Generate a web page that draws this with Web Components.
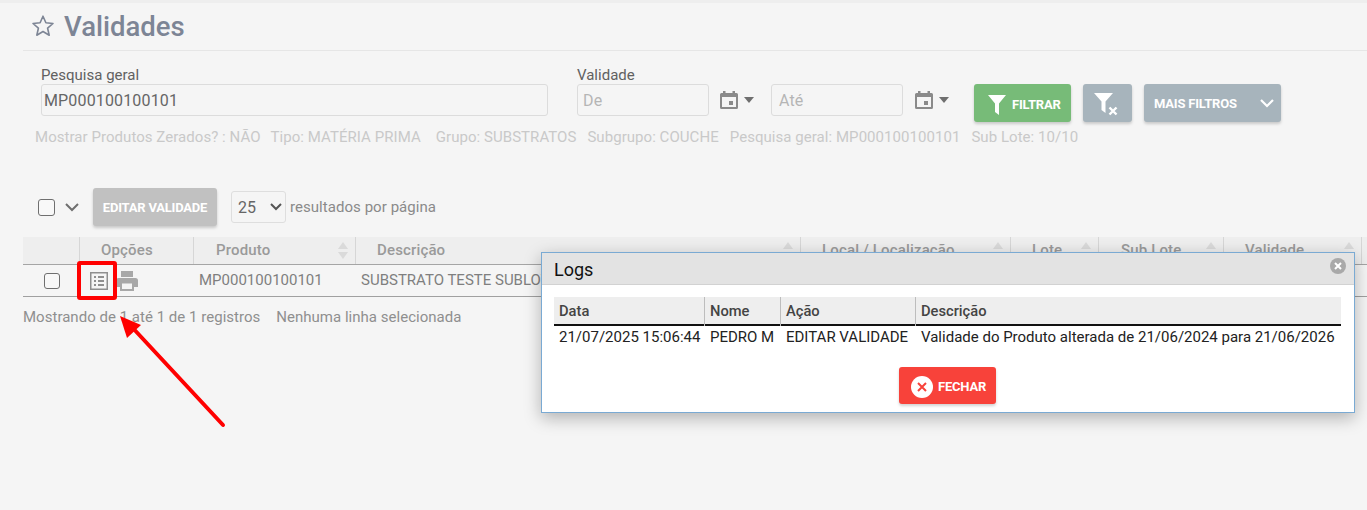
<!DOCTYPE html>
<html lang="pt"><head><meta charset="utf-8"><title>Validades</title>
<style>
html,body{margin:0;padding:0;background:#f5f5f5;font-family:Roboto,sans-serif}
body{width:1367px;height:510px;overflow:hidden;position:relative}
</style></head><body>
<validades-page></validades-page>
<template id="tpl-btn"><style>
:host{display:inline-flex;align-items:center;box-sizing:border-box;height:38px;border-radius:3px;background:var(--bg,#a7b4bc);color:#fff;font:700 13px Roboto,sans-serif;box-shadow:0 2px 3px rgba(0,0,0,.18);white-space:nowrap;letter-spacing:-.2px}
</style><slot></slot></template>
<template id="tpl-field"><style>
:host{display:block;box-sizing:border-box;height:32px;border:1px solid #dcdcdc;border-radius:3px;font:16px Roboto,sans-serif;line-height:31px;padding-left:var(--pl,2px);color:var(--c,#6e6e6e);width:var(--w,100px);letter-spacing:.15px}
</style><slot></slot></template>
<template id="tpl-check"><style>
:host{display:block;box-sizing:border-box;width:var(--s,16px);height:var(--s,16px);border:1px solid #6f6f6f;border-radius:3px;background:#f8f8f8}
</style></template>
<template id="tpl-page"><style>
:host{display:block;color:#777}
svg{display:block}
.top{height:3px;background:#eee}
.main{padding-left:23px}
.title{display:flex;align-items:center;gap:9px;padding-left:8px;border-bottom:1px solid #e6e6e6;box-sizing:border-box;height:48px}
.title svg{margin-top:-2px}
h1{margin:1px 0 0;font:500 27.5px/1 Roboto,sans-serif;color:#7d8595}
.filters{display:flex;padding:16px 0 0 18px;height:50px;position:relative}
.lab{font:15px/16px Roboto,sans-serif;color:#616161;height:17px}
.g1{width:536px}
.g2{width:397px}
.dates{display:flex;align-items:center}
.caret{width:0;height:0;border:5px solid transparent;border-top:6px solid #6f6f6f;border-bottom:0;margin-left:5px}
.btns{display:flex;gap:12px;align-self:flex-start;margin-top:17px}
.sum{padding:11px 0 0 12px;font:15px/18px Roboto,sans-serif;letter-spacing:.05px;color:#c9c9c9;height:19px;white-space:nowrap;display:flex}
.act{display:flex;align-items:center;margin-top:41px;height:38px;padding-left:15px}
.sel{box-sizing:border-box;width:55px;height:32px;border:1px solid #dedede;border-radius:3px;display:flex;align-items:center;justify-content:space-between;padding:0 3px 0 6px;font:16px Roboto,sans-serif;color:#666;margin-left:14px}
.res{font:15px Roboto,sans-serif;color:#8a8a8a;margin-left:4px;letter-spacing:.05px}
.tbl{margin-top:11px;width:1344px;font:15px Roboto,sans-serif}
.hd,.rw{display:grid;grid-template-columns:56px 114px 162px 445px 210px 88px 125px 138px 6px}
.hd{height:28px;background:#eee;border-bottom:1px solid #a5a5a5;box-sizing:border-box}
.hd>div{border-left:1px solid #d6d6d6;position:relative;color:#9a9a9a;font-weight:500;line-height:27px;padding-left:21px;white-space:nowrap;box-sizing:border-box;letter-spacing:.15px}
.hd>div:first-child{border-left:0}
.up,.dn{position:absolute;right:7px;width:0;height:0;border:5px solid transparent;border-bottom:0;border-top:0}
.up{top:5px;border-bottom:7px solid #dadada}
.dn{top:15px;border-top:7px solid #dadada}
.rw{height:32px;border-bottom:1px solid #a0a0a0;box-sizing:border-box;color:#7f7f7f;white-space:nowrap;align-items:center}
.rw>.c{padding-left:6px;margin-top:-2px}
.opts{display:flex;align-items:center;gap:7px;padding-left:11px}
.foot{margin-top:11px;font:15px/18px Roboto,sans-serif;color:#8f8f8f;display:flex;gap:16px;letter-spacing:.02px}
.modal{position:absolute;left:541px;top:252px;width:814px;height:161px;box-sizing:border-box;background:#fff;border:1px solid #7aaad3;box-shadow:0 5px 16px rgba(0,0,0,.28);color:#333}
.mh{height:32px;background:#e3e3e3;border-bottom:1px solid #d2d2d2;box-sizing:border-box;font:400 18px/33px Roboto,sans-serif;color:#111;padding-left:12px;position:relative}
.x{position:absolute;right:8px;top:5px}
.mb{padding:12px 13px 0 12px}
.mhd,.mrw{display:grid;grid-template-columns:150px 76px 135px 1fr;white-space:nowrap}
.mhd{height:29px;background:#eee;border-bottom:2px solid #111;box-sizing:border-box;color:#444;font:500 14.7px/29px Roboto,sans-serif}
.mhd>div{padding-left:5px;border-left:1px solid #bdbdbd}
.mhd>div:first-child{border-left:0}
.mrw{color:#222;height:24px;font:15px/22px Roboto,sans-serif}
.mrw>div{padding-left:6px}
.mrw>div:first-child{padding-left:5px}
.mf{display:flex;justify-content:center;margin-top:17px}
.redbox{position:absolute;left:77px;top:261px;width:40px;height:39px;box-sizing:border-box;border:4px solid #f00;border-radius:3px}
.arrow{position:absolute;left:110px;top:305px}
</style>
<div class="top"></div>
<div class="main">
  <div class="title">
    <svg width="24" height="24" viewBox="0 0 24 24" fill="none" stroke="#7d8595" stroke-width="1.6" stroke-linejoin="round"><path d="M12 2.200l2.900 6.600 7.100.7-5.400 4.700 1.600 7-6.200-3.700-6.200 3.700 1.600-7L2 9.500l7.100-.7z"/></svg>
    <h1>Validades</h1>
  </div>
  <div class="filters">
    <div class="g1"><div class="lab">Pesquisa geral</div><ui-field style="--w:507px;--c:#666">MP000100100101</ui-field></div>
    <div class="g2"><div class="lab">Validade</div>
      <div class="dates">
        <ui-field style="--w:132px;--c:#b5b5b5;--pl:5px">De</ui-field>
        <svg style="margin-left:10px" width="20" height="20" viewBox="0 0 20 20"><path fill="#8a8a8a" d="M4 1h2.500v2h7V1H16v2h1.500A1.500 1.500 0 0 1 19 4.500v13a1.500 1.500 0 0 1-1.500 1.500h-15A1.500 1.500 0 0 1 1 17.500v-13A1.500 1.500 0 0 1 2.500 3H4zM3 7v10h14V7z"/><rect x="10" y="11" width="4" height="4" fill="#8a8a8a"/></svg>
        <span class="caret"></span>
        <ui-field style="--w:132px;--c:#b5b5b5;--pl:7px;margin-left:17px">Até</ui-field>
        <svg style="margin-left:11px" width="20" height="20" viewBox="0 0 20 20"><path fill="#8a8a8a" d="M4 1h2.500v2h7V1H16v2h1.500A1.500 1.500 0 0 1 19 4.500v13a1.500 1.500 0 0 1-1.500 1.500h-15A1.500 1.500 0 0 1 1 17.500v-13A1.500 1.500 0 0 1 2.500 3H4zM3 7v10h14V7z"/><rect x="10" y="11" width="4" height="4" fill="#8a8a8a"/></svg>
        <span class="caret"></span>
      </div>
    </div>
    <div class="btns">
      <ui-btn style="--bg:#77bb78;width:97px;padding:2px 0 0 13px"><svg width="20" height="21" viewBox="0 0 20 21" fill="#fff" style="margin-right:5px"><path d="M1 1h18l-7 8.500V21l-4-3V9.500z"/></svg>FILTRAR</ui-btn>
      <ui-btn style="width:49px;padding:2px 0 0 11px"><svg width="27" height="24" viewBox="0 0 27 24" fill="#fff"><path d="M0 1h19l-7.500 8.500V21L7.500 18V9.500z"/><path d="M15.500 15.500l7 7M22.500 15.500l-7 7" stroke="#fff" stroke-width="2.400"/></svg></ui-btn>
      <ui-btn style="width:137px;padding-left:10px;justify-content:flex-start">MAIS FILTROS<svg style="margin-left:23px" width="14" height="9" viewBox="0 0 14 9" fill="none" stroke="#fff" stroke-width="2.200"><path d="M1 1l6 6 6-6"/></svg></ui-btn>
    </div>
  </div>
  <div class="sum"><span>Mostrar Produtos Zerados? : NÃO</span><span style="margin-left:10px">Tipo: MATÉRIA PRIMA</span><span style="margin-left:15px">Grupo: SUBSTRATOS</span><span style="margin-left:11px">Subgrupo: COUCHE</span><span style="margin-left:11px">Pesquisa geral: MP000100100101</span><span style="margin-left:11px">Sub Lote: 10/10</span></div>
  <div class="act">
    <ui-check style="--s:17px"></ui-check>
    <svg style="margin-left:10px" width="14" height="9" viewBox="0 0 14 9" fill="none" stroke="#6f6f6f" stroke-width="2"><path d="M1 1l6 6 6-6"/></svg>
    <ui-btn style="--bg:#c1c1c1;width:124px;justify-content:center;margin-left:14px">EDITAR VALIDADE</ui-btn>
    <div class="sel"><span>25</span><svg width="12" height="8" viewBox="0 0 12 8" fill="none" stroke="#555" stroke-width="2"><path d="M1 1l5 5 5-5"/></svg></div>
    <span class="res">resultados por página</span>
  </div>
  <div class="tbl">
    <div class="hd">
      <div></div><div>Opções</div><div style="padding-left:22px">Produto<i class="up"></i><i class="dn"></i></div>
      <div>Descrição<i class="up"></i><i class="dn"></i></div>
      <div>Local / Localização<i class="up"></i><i class="dn"></i></div><div>Lote<i class="up"></i><i class="dn"></i></div><div style="padding-left:22px">Sub Lote<i class="up"></i><i class="dn"></i></div><div>Validade<i class="up"></i><i class="dn"></i></div><div></div>
    </div>
    <div class="rw">
      <div style="padding-left:21px"><ui-check></ui-check></div>
      <div class="opts">
        <svg width="18" height="18" viewBox="0 0 18 18" fill="none" stroke="#8f8f8f"><rect x=".75" y=".75" width="16.500" height="16.500" stroke-width="1.500"/><path d="M4 5h2M8 5h6M4 9h2M8 9h6M4 13h2M8 13h6" stroke-width="2"/></svg>
        <svg width="22" height="20" viewBox="0 0 22 20" style="margin-left:1px"><path fill="#a8a8a8" d="M5 0h12v6H5zM2.500 7h17A2.500 2.500 0 0 1 22 9.500V16h-4v4H4v-4H0V9.500A2.500 2.500 0 0 1 2.500 7z"/><rect x="6" y="12.500" width="10" height="5.500" fill="#f5f5f5"/></svg>
      </div>
      <div class="c">MP000100100101</div>
      <div class="c">SUBSTRATO TESTE SUBLOTE</div><div></div><div></div><div></div><div></div><div></div>
    </div>
    <div class="foot"><span>Mostrando de 1 até 1 de 1 registros</span><span>Nenhuma linha selecionada</span></div>
  </div>
</div>
<div class="redbox"></div>
<svg class="arrow" width="120" height="125" viewBox="0 0 120 125"><path d="M113 120L20 20" stroke="#f00" stroke-width="4" stroke-linecap="round"/><path d="M10 11l21 9-14 13z" fill="#f00"/></svg>
<div class="modal">
  <div class="mh">Logs<svg class="x" width="16" height="16" viewBox="0 0 16 16"><circle cx="8" cy="8" r="8" fill="#a9a9a9"/><path d="M5 5l6 6M11 5l-6 6" stroke="#fff" stroke-width="2"/></svg></div>
  <div class="mb">
    <div class="mhd"><div>Data</div><div>Nome</div><div>Ação</div><div>Descrição</div></div>
    <div class="mrw"><div>21/07/2025 15:06:44</div><div>PEDRO M</div><div>EDITAR VALIDADE</div><div>Validade do Produto alterada de 21/06/2024 para 21/06/2026</div></div>
    <div class="mf"><ui-btn style="--bg:#f8423a;width:97px;height:37px;padding:2px 0 0 12px">
      <svg width="22" height="22" viewBox="0 0 22 22" style="margin-right:5px"><circle cx="11" cy="11" r="11" fill="#fff"/><path d="M7 7l8 8M15 7l-8 8" stroke="#f8423a" stroke-width="2"/></svg>FECHAR</ui-btn></div>
  </div>
</div>
</template>
<script>
function def(name,tpl){customElements.define(name,class extends HTMLElement{constructor(){super();this.attachShadow({mode:'open'}).appendChild(document.getElementById(tpl).content.cloneNode(true));}});}
def('ui-btn','tpl-btn');def('ui-field','tpl-field');def('ui-check','tpl-check');def('validades-page','tpl-page');
</script>
</body></html>
